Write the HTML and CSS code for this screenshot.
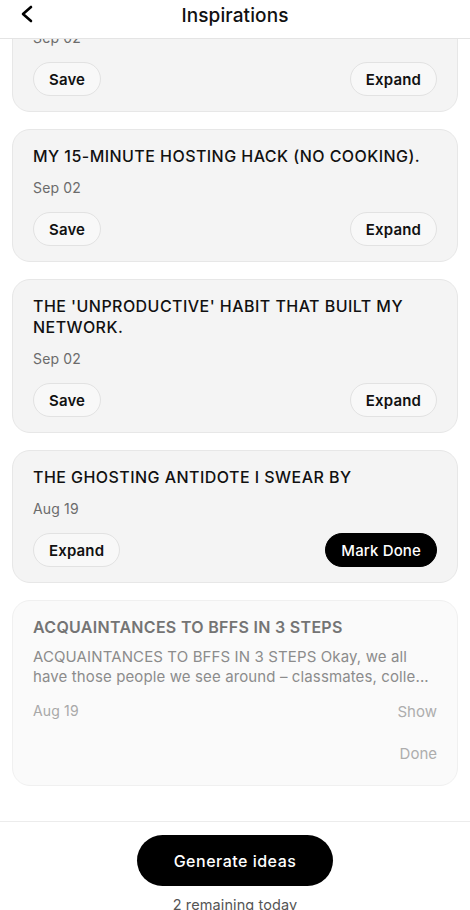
FILE: index.html
```html
<!DOCTYPE html>
<html lang="en">
<head>
<meta charset="utf-8">
<title>Inspirations</title>
<link rel="stylesheet" href="styles.css">
</head>
<body>
<div class="app">
  <header class="topbar">
    <button class="back" aria-label="Back">
      <svg width="14" height="18" viewBox="0 0 14 18"><path d="M11 2 L3 9 L11 16" fill="none" stroke="#000" stroke-width="2.6" stroke-linecap="round" stroke-linejoin="round"/></svg>
    </button>
    <h1 class="title">Inspirations</h1>
  </header>

  <main class="list" id="list">
    <article class="card">
      <h2 class="card-title">WHY I ALWAYS TEXT FIRST.</h2>
      <div class="date">Sep 02</div>
      <div class="actions">
        <button class="pill">Save</button>
        <button class="pill">Expand</button>
      </div>
    </article>

    <article class="card">
      <h2 class="card-title">MY 15-MINUTE HOSTING HACK (NO COOKING).</h2>
      <div class="date">Sep 02</div>
      <div class="actions">
        <button class="pill">Save</button>
        <button class="pill">Expand</button>
      </div>
    </article>

    <article class="card">
      <h2 class="card-title">THE 'UNPRODUCTIVE' HABIT THAT BUILT MY NETWORK.</h2>
      <div class="date">Sep 02</div>
      <div class="actions">
        <button class="pill">Save</button>
        <button class="pill">Expand</button>
      </div>
    </article>

    <article class="card">
      <h2 class="card-title">THE GHOSTING ANTIDOTE I SWEAR BY</h2>
      <div class="date">Aug 19</div>
      <div class="actions">
        <button class="pill">Expand</button>
        <button class="pill pill-dark">Mark Done</button>
      </div>
    </article>

    <article class="card card-done">
      <h2 class="card-title">ACQUAINTANCES TO BFFS IN 3 STEPS</h2>
      <p class="excerpt">ACQUAINTANCES TO BFFS IN 3 STEPS Okay, we all have those people we see around – classmates, colle...</p>
      <div class="done-row">
        <div class="date">Aug 19</div>
        <button class="ghost">Show</button>
      </div>
      <div class="done-row done-end">
        <button class="ghost">Done</button>
      </div>
    </article>
  </main>

  <footer class="footer">
    <button class="generate">Generate ideas</button>
    <div class="remaining">2 remaining today</div>
  </footer>
</div>
<script src="script.js"></script>
</body>
</html>
```

FILE: styles.css
```css
* { box-sizing: border-box; }
html, body { margin: 0; padding: 0; }
body {
  font-family: Inter, "Noto Sans", "Liberation Sans", sans-serif;
  color: #111;
  background: #fff;
  overflow: hidden;
}
button { font-family: inherit; cursor: pointer; }

.app {
  height: 910px;
  display: flex;
  flex-direction: column;
  overflow: hidden;
}

.topbar {
  flex: 0 0 39px;
  display: flex;
  align-items: center;
  justify-content: center;
  position: relative;
  border-bottom: 1px solid #e4e4e4;
  background: #fff;
}
.back {
  position: absolute;
  left: 19px;
  top: 4px;
  border: 0;
  background: none;
  padding: 0;
  width: 16px;
  height: 20px;
  display: flex;
  align-items: center;
  justify-content: center;
}
.title {
  margin: 0;
  font-size: 19px;
  font-weight: 500;
  line-height: 24px;
  margin-top: -7px;
  letter-spacing: 0.1px;
}

.list {
  flex: 1 1 auto;
  min-height: 0;
  overflow-y: auto;
  scrollbar-width: none;
  padding: 16px 12px 36px;
  display: flex;
  flex-direction: column;
  gap: 17px;
}
.list::-webkit-scrollbar { display: none; }

.card {
  flex: 0 0 auto;
  background: #f4f4f4;
  border: 1px solid #e7e7e7;
  border-radius: 18px;
  padding: 16px 20px 15px;
}
.card-title {
  margin: 0;
  font-size: 16px;
  font-weight: 500;
  line-height: 21px;
  letter-spacing: 0.45px;
  color: #111;
}
.date {
  margin-top: 11px;
  font-size: 14px;
  line-height: 20px;
  letter-spacing: 0.15px;
  color: #6b6b6b;
}
.actions {
  margin-top: 14px;
  display: flex;
  justify-content: space-between;
}
.pill {
  height: 34px;
  padding: 0 15px;
  border-radius: 17px;
  border: 1px solid #e2e2e2;
  background: #f8f8f8;
  font-size: 15px;
  font-weight: 600;
  letter-spacing: 0.15px;
  color: #111;
}
.pill-dark {
  background: #000;
  border-color: #000;
  color: #fff;
  font-weight: 500;
}

.card-done {
  background: #fafafa;
  border-color: #f0f0f0;
}
.card-done .card-title { color: #747474; font-weight: 600; letter-spacing: 0.3px; }
.excerpt {
  margin: 9px 0 0;
  font-size: 15px;
  line-height: 20px;
  letter-spacing: 0.12px;
  color: #8c8c8c;
  display: -webkit-box;
  -webkit-line-clamp: 2;
  -webkit-box-orient: vertical;
  overflow: hidden;
}
.done-row {
  display: flex;
  justify-content: space-between;
  align-items: center;
  margin-top: 7px;
}
.done-row .date { margin-top: 0; color: #a8a8a8; }
.done-end { justify-content: flex-end; margin-top: 8px; }
.ghost {
  height: 34px;
  padding: 0;
  border: 0;
  background: none;
  font-size: 15px;
  color: #adadad;
}

.footer {
  flex: 0 0 89px;
  min-height: 0;
  overflow: hidden;
  border-top: 1px solid #ececec;
  padding-top: 13px;
  display: flex;
  flex-direction: column;
  align-items: center;
  gap: 9px;
}
.generate {
  flex: 0 0 auto;
  width: 196px;
  height: 51px;
  border-radius: 26px;
  border: 0;
  background: #000;
  color: #fff;
  font-size: 16px;
  font-weight: 500;
  letter-spacing: 0.5px;
}
.remaining {
  flex: 0 0 auto;
  font-size: 14.5px;
  line-height: 20px;
  letter-spacing: 0.1px;
  color: #555;
}
```

FILE: script.js
```js
document.getElementById('list').scrollTop = 76;
```
